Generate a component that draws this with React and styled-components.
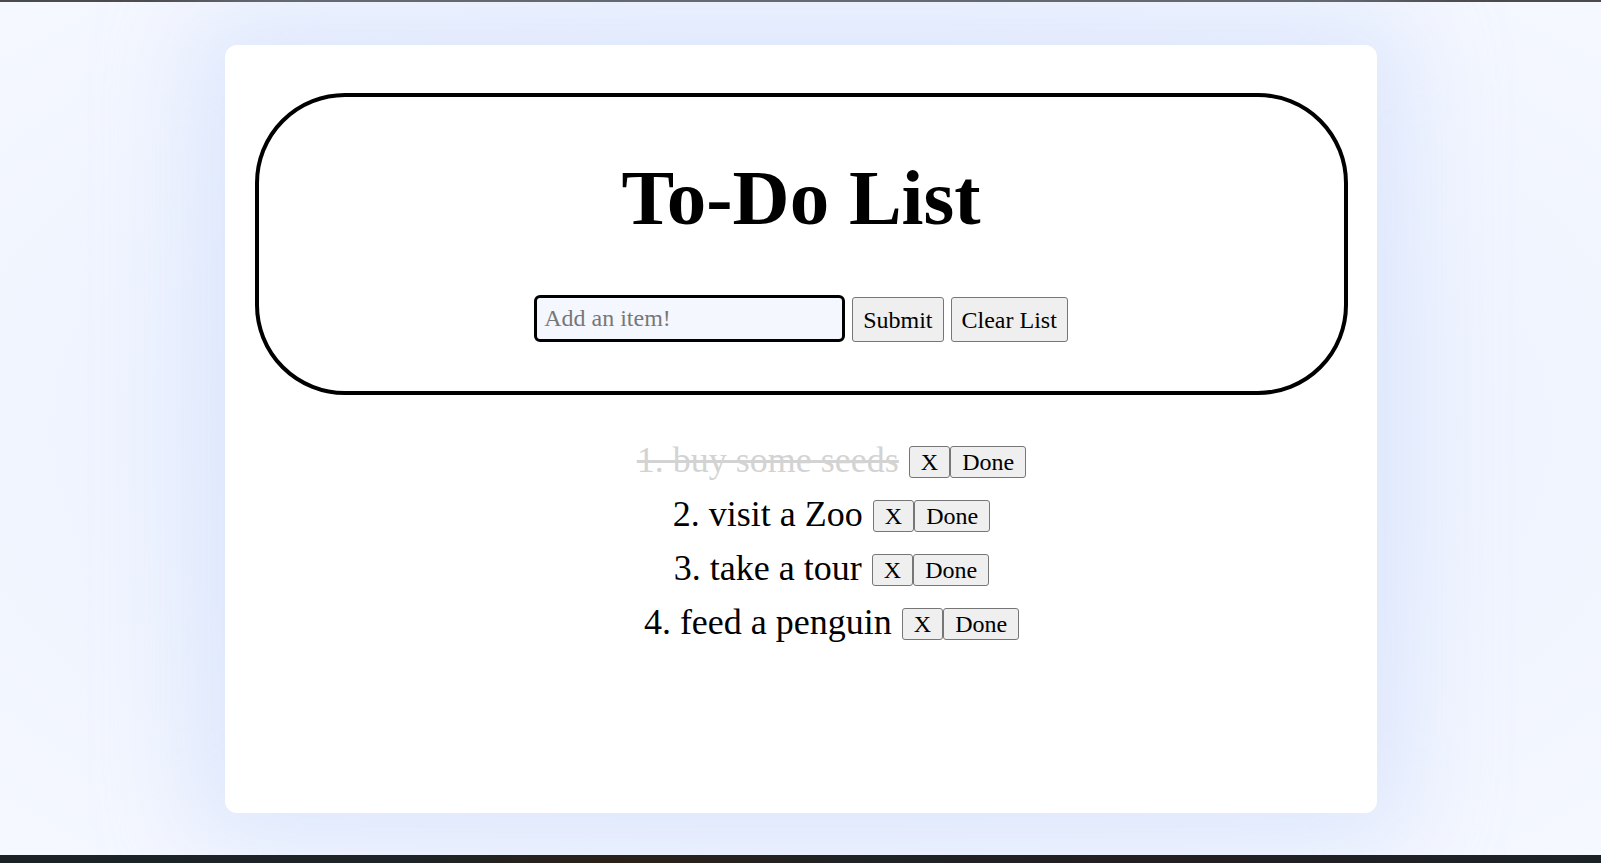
import { useState } from 'react';
import styled, { createGlobalStyle } from 'styled-components';

const GlobalStyle = createGlobalStyle`
    html, body {
        margin: 0;
        padding: 0;
    }
    body {
        font-family: "Liberation Serif", "Times New Roman", serif;
        background: #f4f7fe;
    }
`;

const Page = styled.div`
    display: flex;
    flex-direction: column;
    height: 863px;
    overflow: hidden;
`;

const TopStrip = styled.div`
    height: 2px;
    background: #4b4b4d;
`;

const BottomStrip = styled.div`
    height: 8px;
    background: linear-gradient(90deg, #1b2226 0%, #1d2327 25%, #2a2019 38%, #1f2226 55%, #231e22 70%, #1b2226 100%);
`;

const Main = styled.div`
    flex: 1;
    display: flex;
    justify-content: center;
    align-items: flex-start;
    padding-top: 43px;
    background: radial-gradient(ellipse at center, #e4ecfd 0%, #eef3fe 55%, #f5f8ff 100%);
`;

const Card = styled.div`
    width: 1152px;
    height: 768px;
    box-sizing: border-box;
    padding: 48px 29px 0 30px;
    background: #fff;
    border-radius: 12px;
    box-shadow: 0 0 90px 30px rgba(205, 220, 252, 0.55);
`;

const Header = styled.div`
    height: 302px;
    box-sizing: border-box;
    border: 4px solid #000;
    border-radius: 90px;
    display: flex;
    flex-direction: column;
    align-items: center;
    padding-top: 57px;
`;

const Title = styled.h1`
    margin: 0;
    font-size: 79px;
    font-weight: bold;
    line-height: 88px;
    color: #000;
`;

const Form = styled.form`
    display: flex;
    align-items: flex-end;
    gap: 7px;
    margin-top: 53px;
`;

const Input = styled.input`
    width: 311px;
    height: 47px;
    box-sizing: border-box;
    border: 3px solid #000;
    border-radius: 6px;
    background: #f4f7fe;
    padding: 0 7px;
    font-family: "Liberation Serif", "Times New Roman", serif;
    font-size: 24px;
    color: #000;
    outline: none;

    &::placeholder {
        color: #777;
    }
`;

const Button = styled.button`
    font-family: "Liberation Serif", "Times New Roman", serif;
    font-size: 24px;
    height: ${({big}) => big ? '45px' : '32px'};
    padding: 0 ${({big}) => big ? '10px' : '11px'};
    box-sizing: border-box;
    background: #efefef;
    border: 1px solid #767676;
    border-radius: 3px;
    color: #000;
    line-height: 1;
    cursor: pointer;
`;

const List = styled.ol`
    list-style: none;
    margin: 40px 0 0 0;
    padding: 0 0 0 61px;
`;

const Item = styled.li`
    display: flex;
    justify-content: center;
    align-items: center;
    height: 54px;
    font-size: 36px;
    color: ${({done}) => done ? '#d3d3d3' : '#000'};
`;

const ItemText = styled.span`
    text-decoration: ${({done}) => done ? 'line-through' : 'none'};
    margin-right: 10px;
    position: relative;
    top: -2px;
`;

const initial = [
    {text: 'buy some seeds', done: true},
    {text: 'visit a Zoo', done: false},
    {text: 'take a tour', done: false},
    {text: 'feed a penguin', done: false},
];

const App = () => {
    const [items, setItems] = useState(initial);
    const [value, setValue] = useState('');

    const submit = (e) => {
        e.preventDefault();
        if (!value.trim()) return;
        setItems([...items, {text: value, done: false}]);
        setValue('');
    }

    const remove = (idx) => setItems(items.filter((_, i) => i !== idx));
    const toggle = (idx) => setItems(items.map((it, i) => i === idx ? {...it, done: !it.done} : it));

    return (<>
        <GlobalStyle/>
        <Page>
            <TopStrip/>
            <Main>
                <Card>
                    <Header>
                        <Title>To-Do List</Title>
                        <Form onSubmit={submit}>
                            <Input placeholder="Add an item!" value={value} onChange={(e) => setValue(e.target.value)}/>
                            <Button big type="submit">Submit</Button>
                            <Button big type="button" onClick={() => setItems([])}>Clear List</Button>
                        </Form>
                    </Header>
                    <List>
                        {items.map((each, idx) => (
                            <Item done={each.done} key={`item_${idx}`}>
                                <ItemText done={each.done}>{`${idx + 1}. ${each.text}`}</ItemText>
                                <Button type="button" onClick={() => remove(idx)}>X</Button>
                                <Button type="button" onClick={() => toggle(idx)}>Done</Button>
                            </Item>
                        ))}
                    </List>
                </Card>
            </Main>
            <BottomStrip/>
        </Page>
    </>)
}

export default App;
